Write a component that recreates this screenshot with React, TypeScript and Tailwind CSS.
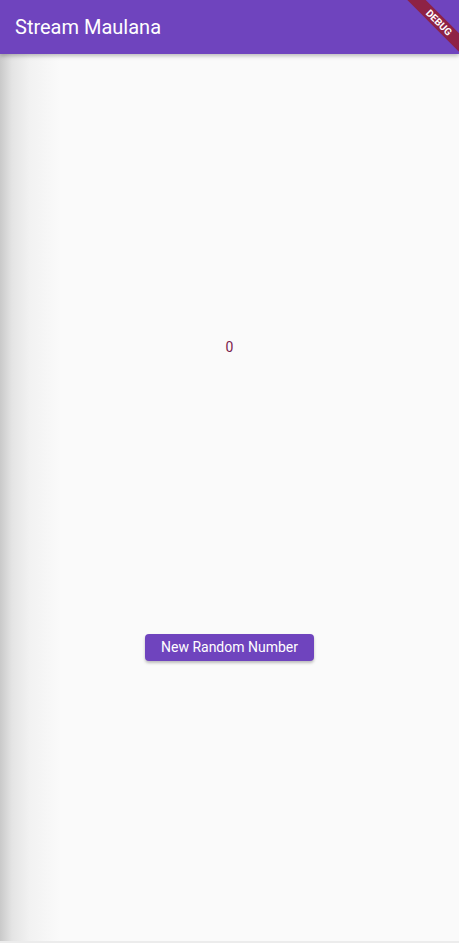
import { useState } from "react";

const App = () => {
  const [value, setValue] = useState(0);

  return (
    <div className="relative flex flex-col h-[943px] w-full overflow-hidden bg-[#fafafa] font-['Roboto',sans-serif]">
      <header className="relative z-10 flex items-center h-[54px] px-[15px] bg-[#6f44be] shadow-[0_2px_4px_rgba(0,0,0,0.25)]">
        <h1 className="text-white text-[20px] leading-none">Stream Maulana</h1>
      </header>

      <main className="flex-1 flex flex-col items-center justify-evenly pt-[5px] border-b-2 border-[#ececec] bg-[linear-gradient(to_right,#c9c9c9,#e4e4e4_12px,#f2f2f2_30px,#fafafa_60px)]">
        <p className="text-[14px] leading-4 text-[#7a1a4c]">{value}</p>
        <button
          type="button"
          className="h-[27px] px-4 rounded bg-[#6f44be] text-white text-[14px] shadow-[0_2px_3px_rgba(0,0,0,0.25)]"
          onClick={() => setValue(Math.floor(Math.random() * 100))}
        >
          New Random Number
        </button>
      </main>

      {/* debug banner */}
      <div className="absolute top-0 right-0 z-20 w-[80px] h-[80px] overflow-hidden pointer-events-none">
        <div className="absolute left-[0px] top-[16px] w-[120px] h-[13px] rotate-45 bg-[#8e2245] flex items-center justify-center">
          <span className="text-white text-[10px] font-bold leading-none">DEBUG</span>
        </div>
      </div>
    </div>
  );
};

export default App;
